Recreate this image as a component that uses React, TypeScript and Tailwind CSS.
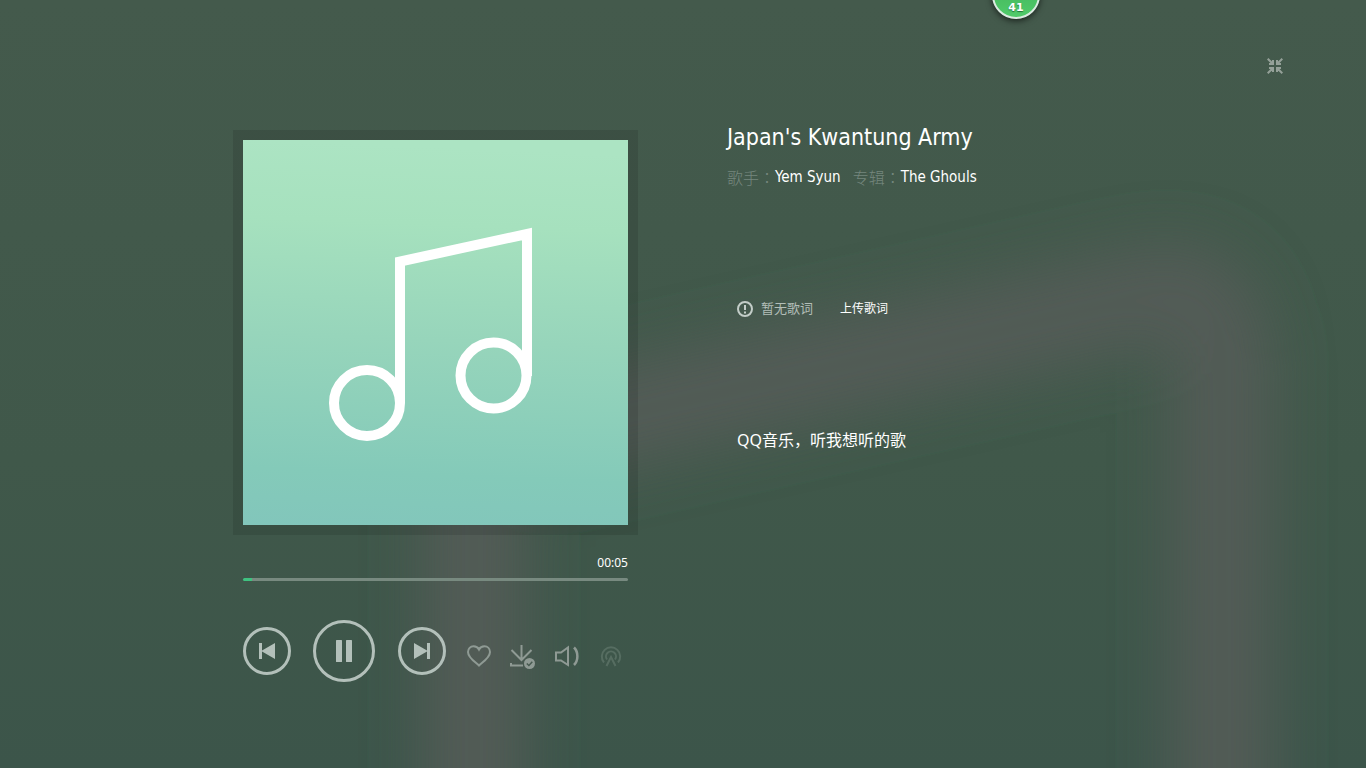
import { useState } from 'react'
import type { ReactNode } from 'react'

const track = {
  title: "Japan's Kwantung Army",
  artist: 'Yem Syun',
  album: 'The Ghouls',
  duration: 215,
}

function formatTime(seconds: number) {
  const m = String(Math.floor(seconds / 60)).padStart(2, '0')
  const s = String(seconds % 60).padStart(2, '0')
  return `${m}:${s}`
}

/* Blown-up, blurred copy of the cover behind the whole player */
function Backdrop() {
  return (
    <svg
      className="absolute inset-0 w-full h-full"
      viewBox="0 0 1366 768"
      preserveAspectRatio="xMidYMid slice"
      aria-hidden="true"
    >
      <defs>
        <linearGradient id="backdrop" x1="0" y1="0" x2="0" y2="1">
          <stop offset="0" stopColor="#445a4c" />
          <stop offset="0.6" stopColor="#40584a" />
          <stop offset="1" stopColor="#3c554a" />
        </linearGradient>
        <filter id="soften" x="-20%" y="-20%" width="140%" height="140%">
          <feGaussianBlur stdDeviation="30" />
        </filter>
      </defs>
      <rect width="1366" height="768" fill="url(#backdrop)" />
      <path
        d="M474 900V448L1150 296Q1222 280 1222 370V900"
        fill="none"
        stroke="#525c56"
        strokeWidth="100"
        filter="url(#soften)"
      />
    </svg>
  )
}

function Cover() {
  return (
    <svg className="block w-full" viewBox="0 0 385 385" role="img" aria-label="Album cover">
      <defs>
        <linearGradient id="cover" x1="0.04" y1="0" x2="0" y2="1">
          <stop offset="0" stopColor="#ace4c3" />
          <stop offset="0.2" stopColor="#a6e1be" />
          <stop offset="0.5" stopColor="#97d5bb" />
          <stop offset="0.85" stopColor="#84cab9" />
          <stop offset="1" stopColor="#82c6bb" />
        </linearGradient>
      </defs>
      <rect width="385" height="385" fill="url(#cover)" />
      <g fill="none" stroke="#fff" strokeWidth="10">
        <circle cx="124" cy="263" r="33" />
        <circle cx="250.500" cy="235.500" r="33" />
        <path d="M157 263V121.500L284 94V236" />
      </g>
    </svg>
  )
}

function IconButton({ label, children }: { label: string; children: ReactNode }) {
  return (
    <button aria-label={label} className="size-[26px] flex items-center justify-center cursor-pointer">
      {children}
    </button>
  )
}

export default function App() {
  const [playing, setPlaying] = useState(true)
  const [position, setPosition] = useState(5)

  const percent = (position / track.duration) * 100

  return (
    <div className="relative min-h-screen overflow-hidden bg-[#40584b] text-white font-['Noto_Sans','Noto_Sans_CJK_SC',sans-serif]">
      <Backdrop />

      {/* Floating counter, tucked under the top edge */}
      <div className="absolute -top-[29px] right-[326px] size-12 rounded-full border-2 border-[#dcebe2] bg-linear-to-b from-[#3fae58] to-[#50cb6a] shadow-[0_2px_6px_rgba(0,0,0,0.6)] flex items-end justify-center pb-[3px] text-[11px] leading-3 font-bold font-['DejaVu_Sans',sans-serif] [text-shadow:0_1px_1px_#23733a]">
        41
      </div>

      <div className="relative">
        <header className="h-[120px] flex justify-end pt-[58px] pr-[83px]">
          <button aria-label="Exit full screen" className="size-4 cursor-pointer">
            <svg className="size-4" viewBox="0 0 16 16" fill="none" stroke="#94a098" strokeWidth="2">
              <path d="M0.700 0.700L6 6M2 6H7M6 7V2" />
              <path d="M15.300 0.700L10 6M14 6H9M10 7V2" />
              <path d="M0.700 15.300L6 10M2 10H7M6 9V14" />
              <path d="M15.300 15.300L10 10M14 10H9M10 9V14" />
            </svg>
          </button>
        </header>

        <main className="max-w-[900px] mx-auto flex items-start gap-[89px]">
          <section className="w-[405px] shrink-0 pt-[10px]">
            <div className="p-[10px] bg-black/10">
              <Cover />
            </div>

            <div className="px-[10px]">
              <p className="mt-5 text-xs text-right">{formatTime(position)}</p>
              <input
                type="range"
                aria-label="Playback position"
                min={0}
                max={track.duration}
                value={position}
                onChange={e => setPosition(Number(e.target.value))}
                className="mt-[7px] block w-full h-[3px] rounded-full appearance-none cursor-pointer [&::-webkit-slider-thumb]:appearance-none [&::-webkit-slider-thumb]:size-0"
                style={{
                  background: `linear-gradient(to right, #3fc280 ${percent}%, #788a80 ${percent}%)`,
                }}
              />

              {/* Transport controls */}
              <div className="mt-[39px] flex items-center text-[#b3c0ba]">
                <button
                  aria-label="Previous"
                  className="size-12 rounded-full border-3 border-current flex items-center justify-center cursor-pointer"
                >
                  <svg className="size-4" viewBox="0 0 16 16" fill="currentColor">
                    <path d="M0 0H3V7.500L16 0V16L3 8.500V16H0Z" />
                  </svg>
                </button>
                <button
                  aria-label={playing ? 'Pause' : 'Play'}
                  onClick={() => setPlaying(!playing)}
                  className="ml-[22px] size-[62px] rounded-full border-3 border-current flex items-center justify-center cursor-pointer"
                >
                  <svg className="w-4 h-[22px]" viewBox="0 0 16 22" fill="currentColor">
                    {playing ? (
                      <>
                        <rect width="6" height="22" rx="0.500" />
                        <rect x="10" width="6" height="22" rx="0.500" />
                      </>
                    ) : (
                      <path d="M1 1L16 11L1 21Z" />
                    )}
                  </svg>
                </button>
                <button
                  aria-label="Next"
                  className="ml-[23px] size-12 rounded-full border-3 border-current flex items-center justify-center cursor-pointer"
                >
                  <svg className="size-4" viewBox="0 0 16 16" fill="currentColor">
                    <path d="M16 0H13V7.500L0 0V16L13 8.500V16H16Z" />
                  </svg>
                </button>

                <div className="ml-5 pt-[10px] flex gap-[18px] text-[#8f9a94]">
                  <IconButton label="Like">
                    <svg className="size-[26px]" viewBox="0 0 26 26" fill="none" stroke="currentColor" strokeWidth="2">
                      <path d="M13 22.500C10 19.500 2 15 2 9C2 5.500 4.500 3.300 7.500 3.300C10 3.300 12 4.500 13 6.500C14 4.500 16 3.300 18.500 3.300C21.500 3.300 24 5.500 24 9C24 15 16 19.500 13 22.500Z" />
                    </svg>
                  </IconButton>
                  <IconButton label="Downloaded">
                    <svg className="size-[26px]" viewBox="0 0 26 26" fill="none" stroke="currentColor" strokeWidth="2">
                      <path d="M11.500 2V16.500M1.500 7L11.500 17L21.500 7" />
                      <path d="M1 20V22.500H13" />
                      <circle cx="19.500" cy="20.500" r="5.500" fill="currentColor" stroke="none" />
                      <path d="M16.800 20.500L18.900 22.500L22.300 18.800" stroke="#485a50" strokeWidth="1.500" />
                    </svg>
                  </IconButton>
                  <IconButton label="Volume">
                    <svg className="size-[26px]" viewBox="0 0 26 26" fill="none" stroke="currentColor" strokeWidth="2">
                      <path d="M2 9.500H7L14 4.500V22L7 17.500H2Z" />
                      <path d="M20 4.500C24.500 9 24.500 17.500 20 22" strokeWidth="2.500" />
                    </svg>
                  </IconButton>
                  <IconButton label="Cast">
                    <svg className="size-[26px]" viewBox="0 0 26 26" fill="none" stroke="#566d61" strokeWidth="2">
                      <path d="M6 19.500A9.200 9.200 0 1 1 20 19.500" />
                      <path d="M9 16.500A5 5 0 1 1 17 16.500" />
                      <path d="M8.500 23L13 14L17.500 23" />
                    </svg>
                  </IconButton>
                </div>
              </div>
            </div>
          </section>

          <section className="flex-1 min-w-0">
            <h1 className="text-[23px] leading-[34px] font-['DejaVu_Sans_Condensed','Noto_Sans_CJK_SC',sans-serif]">
              {track.title}
            </h1>
            <p className="mt-[11px] flex text-base leading-6 font-['DejaVu_Sans_Condensed','Noto_Sans_CJK_SC',sans-serif]">
              <span className="text-[#75877e] font-light">
                歌手<span className="font-['Noto_Sans_CJK_TC',sans-serif]">：</span>
              </span>
              <span className="text-[15px]">{track.artist}</span>
              <span className="ml-3 text-[#75877e] font-light">
                专辑<span className="font-['Noto_Sans_CJK_TC',sans-serif]">：</span>
              </span>
              <span className="text-[15px]">{track.album}</span>
            </p>

            {/* Lyrics area */}
            <div className="pl-[10px]">
              <div className="mt-[106px] h-6 flex items-center">
                <svg className="size-4" viewBox="0 0 16 16" fill="none" stroke="#c3cdc8" strokeWidth="2" aria-hidden="true">
                  <circle cx="8" cy="8" r="7" />
                  <path d="M8 4V9M8 10.500V12.500" />
                </svg>
                <span className="ml-2 text-[13px] text-[#b3beb8]">暂无歌词</span>
                <a href="#upload" className="ml-[27px] text-xs">上传歌词</a>
              </div>
              <p className="mt-[107px] text-base leading-6">QQ音乐，听我想听的歌</p>
            </div>
          </section>
        </main>
      </div>
    </div>
  )
}
